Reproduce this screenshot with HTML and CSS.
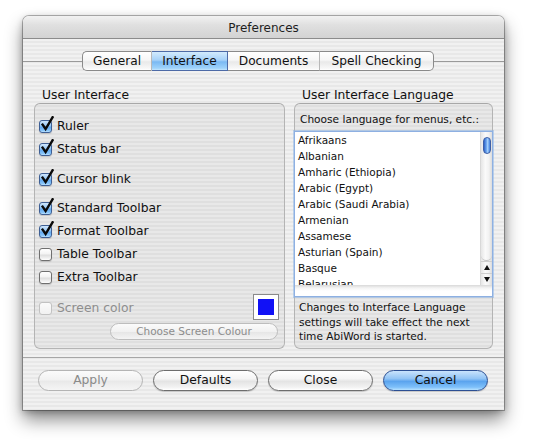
FILE: index.html
```html
<!DOCTYPE html>
<html>
<head>
<meta charset="utf-8">
<link rel="stylesheet" href="styles.css">
</head>
<body>
<div class="window">
  <div class="titlebar">Preferences</div>
  <div class="content">
    <div class="tabs">
      <div class="tab t-general">General</div>
      <div class="tab t-interface sel">Interface</div>
      <div class="tab t-docs">Documents</div>
      <div class="tab t-spell">Spell Checking</div>
    </div>
    <div class="panel">
      <div class="col col-left">
        <div class="glabel">User Interface</div>
        <div class="group group-left">
          <div class="row"><span class="cb on"><svg class="tick" viewBox="0 0 14 16" width="14" height="16"><path d="M2.6 8.6 L5.6 13 L12.6 1.2" fill="none" stroke="#0a0a0a" stroke-width="2.4" stroke-linecap="square"/></svg></span><span class="lbl">Ruler</span></div>
          <div class="row"><span class="cb on"><svg class="tick" viewBox="0 0 14 16" width="14" height="16"><path d="M2.6 8.6 L5.6 13 L12.6 1.2" fill="none" stroke="#0a0a0a" stroke-width="2.4" stroke-linecap="square"/></svg></span><span class="lbl">Status bar</span></div>
          <div class="row gap7"><span class="cb on"><svg class="tick" viewBox="0 0 14 16" width="14" height="16"><path d="M2.6 8.6 L5.6 13 L12.6 1.2" fill="none" stroke="#0a0a0a" stroke-width="2.4" stroke-linecap="square"/></svg></span><span class="lbl">Cursor blink</span></div>
          <div class="row gap6"><span class="cb on"><svg class="tick" viewBox="0 0 14 16" width="14" height="16"><path d="M2.6 8.6 L5.6 13 L12.6 1.2" fill="none" stroke="#0a0a0a" stroke-width="2.4" stroke-linecap="square"/></svg></span><span class="lbl">Standard Toolbar</span></div>
          <div class="row"><span class="cb on"><svg class="tick" viewBox="0 0 14 16" width="14" height="16"><path d="M2.6 8.6 L5.6 13 L12.6 1.2" fill="none" stroke="#0a0a0a" stroke-width="2.4" stroke-linecap="square"/></svg></span><span class="lbl">Format Toolbar</span></div>
          <div class="row"><span class="cb"></span><span class="lbl">Table Toolbar</span></div>
          <div class="row"><span class="cb"></span><span class="lbl">Extra Toolbar</span></div>
          <div class="row gap8"><span class="cb dis"></span><span class="lbl dim">Screen color</span><span class="swatch"><span class="swatch-in"></span></span></div>
          <div class="smallbtn">Choose Screen Colour</div>
        </div>
      </div>
      <div class="col col-right">
        <div class="glabel">User Interface Language</div>
        <div class="group group-right">
          <div class="small choose">Choose language for menus, etc.:</div>
          <div class="list">
            <div class="viewport">
              <div class="items">
                <div class="item">Afrikaans</div>
                <div class="item">Albanian</div>
                <div class="item">Amharic (Ethiopia)</div>
                <div class="item">Arabic (Egypt)</div>
                <div class="item">Arabic (Saudi Arabia)</div>
                <div class="item">Armenian</div>
                <div class="item">Assamese</div>
                <div class="item">Asturian (Spain)</div>
                <div class="item">Basque</div>
                <div class="item">Belarusian</div>
              </div>
              <div class="scrollbar">
                <div class="track"><div class="thumb"></div></div>
                <div class="arrow up"><span class="tri-up"></span></div>
                <div class="arrow down"><span class="tri-down"></span></div>
              </div>
            </div>
            <div class="hstrip"></div>
          </div>
          <div class="small note">Changes to Interface Language settings will take effect the next time AbiWord is started.</div>
        </div>
      </div>
    </div>
    <div class="buttons">
      <div class="btn disabled">Apply</div>
      <div class="btn">Defaults</div>
      <div class="btn">Close</div>
      <div class="btn default">Cancel</div>
    </div>
  </div>
</div>
</body>
</html>
```
FILE: styles.css
```css
html, body {
  margin: 0;
  padding: 0;
  background: #ffffff;
}
body {
  font-family: "DejaVu Sans", "Lucida Grande", sans-serif;
  font-size: 12.3px;
  color: #111;
  width: 535px;
  height: 442px;
  overflow: hidden;
}
.window {
  margin: 16px 0 0 23px;
  width: 481px;
  height: 394px;
  border-radius: 6px 6px 0 0;
  box-shadow: 0 0 0 1px rgba(0,0,0,0.28), 0 10px 18px rgba(0,0,0,0.45), 0 2px 7px rgba(0,0,0,0.25);
  display: flex;
  flex-direction: column;
  overflow: hidden;
}
.titlebar {
  box-sizing: border-box;
  height: 23px;
  padding-top: 2px;
  line-height: 20px;
  text-align: center;
  font-size: 12px;
  color: #1e1e1e;
  background: linear-gradient(#f2f2f2, #e0e0e0 40%, #d3d3d3);
  border-bottom: 1px solid #8c8c8c;
  flex: none;
}
.content {
  flex: 1;
  display: flex;
  flex-direction: column;
  padding-top: 12px;
  background: repeating-linear-gradient(to bottom, #f1f1f1 0px, #f1f1f1 2px, #e8e8e8 2px, #e8e8e8 4px);
}
.tabs {
  display: flex;
  height: 20px;
  margin-left: 59px;
  position: relative;
  z-index: 2;
}
.tab {
  box-sizing: border-box;
  height: 20px;
  line-height: 19px;
  text-align: center;
  font-size: 12.2px;
  border: 1px solid #8a8a8a;
  border-left: none;
  background: linear-gradient(#ffffff, #f6f6f6 45%, #e9e9e9 55%, #f7f7f7 90%, #ffffff);
  color: #111;
}
.t-general { width: 70px; border-left: 1px solid #8a8a8a; border-radius: 5px 0 0 5px; border-right-color: #b8b8b8; }
.t-interface { width: 76px; }
.t-docs { width: 92px; border-right-color: #b8b8b8; }
.t-spell { width: 114px; border-radius: 0 5px 5px 0; }
.tab.sel {
  background: linear-gradient(#d3ebfd, #a6d1f8 45%, #7ab9f3 55%, #9fd3fb 90%, #c6e7fe);
  border-color: #4d6aa6;
}
.panel {
  margin-top: -10px;
  border-top: 1px solid #999;
  border-bottom: 1px solid #a6a6a6;
  padding: 26px 11px 8px 11px;
  display: flex;
  gap: 9px;
}
.col { display: flex; flex-direction: column; }
.col-left { width: 251px; }
.col-right { width: 199px; }
.glabel {
  height: 15px;
  line-height: 15px;
  padding-left: 8px;
  font-size: 12.3px;
}
.group {
  box-sizing: border-box;
  height: 246px;
  border: 1px solid #b4b4b4;
  border-top-color: #a8a8a8;
  border-radius: 6px;
  background: rgba(0,0,0,0.035);
  display: flex;
  flex-direction: column;
}
.group-left { padding: 10px 6px 0 4px; }
.row {
  height: 23px;
  display: flex;
  align-items: center;
}
.gap7 { margin-top: 7px; }
.gap6 { margin-top: 6px; }
.gap8 { margin-top: 8px; }
.cb {
  position: relative;
  box-sizing: border-box;
  width: 13px;
  height: 13px;
  margin-top: 1px;
  border: 1px solid #6f6f6f;
  border-radius: 3px;
  background: linear-gradient(#ffffff, #f3f3f3 45%, #dedede 55%, #f6f6f6 90%, #ffffff);
  box-shadow: 0 1px 1px rgba(0,0,0,0.15);
  flex: none;
}
.cb.on {
  border-color: #3e5f94;
  background: linear-gradient(#cfe6fc, #93c6f5 45%, #62a8ee 55%, #8cc8fb 90%, #c3e6ff);
}
.cb.dis {
  border-color: #c2c2c2;
  background: linear-gradient(#fbfbfb, #f1f1f1);
  box-shadow: none;
}
.tick {
  position: absolute;
  left: 0px;
  top: -5px;
}
.lbl { margin-left: 5px; }
.dim { color: #8e8e8e; }
.swatch {
  margin-left: auto;
  box-sizing: border-box;
  width: 26px;
  height: 26px;
  border: 1px solid #8a8a8a;
  background: #fff;
  padding: 4px;
  margin-right: -1px;
  margin-top: -2px;
}
.swatch-in {
  display: block;
  width: 16px;
  height: 16px;
  background: #1111f6;
}
.smallbtn {
  align-self: flex-end;
  margin-top: 4px;
  box-sizing: border-box;
  width: 168px;
  height: 17px;
  line-height: 15px;
  border: 1px solid #bdbdbd;
  border-radius: 9px;
  text-align: center;
  font-size: 10.5px;
  color: #8c8c8c;
  background: linear-gradient(#fbfbfb, #f1f1f1 50%, #e6e6e6 55%, #f4f4f4);
}
.group-right { padding: 8px 0 0 0; }
.small { font-size: 10.6px; }
.choose {
  height: 14px;
  line-height: 14px;
  padding-left: 5px;
}
.list {
  margin: 5px -1px 0 -1px;
  border: 1px solid #8eb0e2;
  box-shadow: 0 0 0 1px rgba(140,180,230,0.55);
  background: #fff;
}
.viewport {
  height: 153px;
  display: flex;
  overflow: hidden;
}
.items {
  flex: 1;
  padding-left: 3px;
  overflow: hidden;
}
.item {
  height: 16px;
  line-height: 16px;
  font-size: 10.5px;
  color: #111;
  white-space: nowrap;
}
.scrollbar {
  width: 11px;
  display: flex;
  flex-direction: column;
  border-left: 1px solid #d8d8d8;
  background: linear-gradient(to right, #e6e6e6, #fafafa 40%, #f2f2f2 70%, #dcdcdc);
}
.track {
  flex: 1;
  border-radius: 0 0 6px 6px;
  border-bottom: 1px solid #c6c6c6;
  padding-top: 5px;
  display: flex;
  justify-content: center;
}
.thumb {
  width: 8px;
  height: 17px;
  border-radius: 5px;
  border: 1px solid #3d5fa6;
  box-sizing: border-box;
  background: linear-gradient(to right, #2d63c9, #77aef2 45%, #a5d0fb 60%, #3f7ddd);
}
.arrow {
  height: 12px;
  display: flex;
  align-items: center;
  justify-content: center;
  border-top: 1px solid #cfcfcf;
  box-sizing: border-box;
}
.tri-up {
  width: 0; height: 0;
  border-left: 3px solid transparent;
  border-right: 3px solid transparent;
  border-bottom: 5px solid #111;
}
.tri-down {
  width: 0; height: 0;
  border-left: 3px solid transparent;
  border-right: 3px solid transparent;
  border-top: 5px solid #111;
}
.hstrip {
  height: 11px;
  background: linear-gradient(#d8d8d8, #f4f4f4 3px, #ffffff 6px);
}
.note {
  margin-top: 3px;
  padding-left: 4px;
  line-height: 14.5px;
}
.buttons {
  display: flex;
  gap: 10px;
  padding: 12px 16px 0 15px;
}
.btn {
  box-sizing: border-box;
  width: 105px;
  height: 21px;
  line-height: 19px;
  text-align: center;
  font-size: 12.3px;
  border: 1px solid #6d6d6d;
  border-radius: 11px;
  background: linear-gradient(#ffffff, #f5f5f5 40%, #e4e4e4 55%, #f2f2f2 85%, #ffffff);
  box-shadow: 0 1px 1px rgba(0,0,0,0.18);
  color: #111;
}
.btn.disabled {
  border-color: #b4b4b4;
  color: #8a8a8a;
  box-shadow: none;
  background: linear-gradient(#fbfbfb, #f2f2f2 45%, #e9e9e9 55%, #f5f5f5);
}
.btn.default {
  border-color: #2c4f93;
  background: linear-gradient(#c9e3fc, #92c4f5 40%, #5ba4ee 55%, #7ec0fa 85%, #b7e2ff);
}
```
